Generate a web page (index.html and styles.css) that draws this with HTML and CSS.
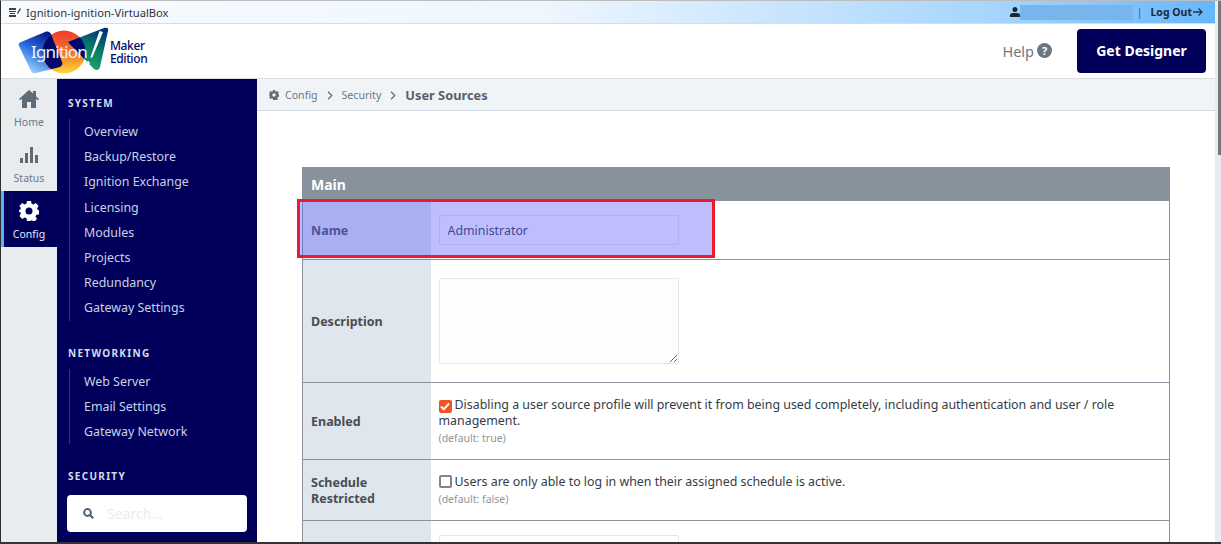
FILE: index.html
```html
<!DOCTYPE html>
<html>
<head>
    <title>User Sources</title>
    <link rel="stylesheet" href="styles.css">
</head>
<body>
<div class="window">
    <div class="page">
        <div class="topbar">
            <div class="host">
                <svg class="host-icon" width="12" height="11" viewBox="0 0 12 11"><path d="M0 1h7v2H0zM0 4h7v1H0zM1 6h5v1H1zM0 8h7v2H0z" fill="#444"/><path d="M8 6l3-5 1 1-3 5z" fill="#444"/></svg>
                <span>Ignition-ignition-VirtualBox</span>
            </div>
            <div class="session">
                <svg width="10" height="10" viewBox="0 0 10 10"><circle cx="5" cy="2.6" r="2.5" fill="#1c2530"/><path d="M0 10V8.4C0 6.8 1.4 6 3 6h4c1.600 0 3 .8 3 2.400V10z" fill="#1c2530"/></svg>
                <span class="blurred"></span>
                <span class="sep">|</span>
                <span class="logout">Log Out</span>
                <svg width="10" height="10" viewBox="0 0 10 10"><path d="M0 5h8.500M5.500 1.500L9 5l-3.500 3.500" fill="none" stroke="#2a3440" stroke-width="1.300"/></svg>
            </div>
        </div>

        <header class="header">
            <div class="logo">
                <svg width="135" height="50" viewBox="0 0 135 50">
                    <defs>
                        <linearGradient id="blue" x1="0.8" y1="0" x2="0.2" y2="1"><stop offset="0" stop-color="#000a78"/><stop offset="0.5" stop-color="#2468dc"/><stop offset="1" stop-color="#aee0ff"/></linearGradient>
                        <linearGradient id="sun" x1="0" y1="0" x2="0" y2="1"><stop offset="0" stop-color="#ee3c30"/><stop offset="0.55" stop-color="#f57a2a"/><stop offset="1" stop-color="#fdd835"/></linearGradient>
                        <linearGradient id="green" x1="0.8" y1="0" x2="0.4" y2="1"><stop offset="0" stop-color="#00307a"/><stop offset="0.5" stop-color="#0a7f6a"/><stop offset="1" stop-color="#1fa765"/></linearGradient>
                        <clipPath id="sun-clip"><circle cx="46" cy="26" r="21.500"/></clipPath>
                    </defs>
                    <path d="M3 16L27 6c3-1 5 0 6 2l11 28c1 2 0 4-2 5L18 47c-2 1-4 0-5-2L1 20c-1-2 0-3 2-4z" fill="url(#blue)"/>
                    <circle cx="46" cy="26" r="21.500" fill="url(#sun)"/>
                    <path d="M50 16L86 2c3-1 5 0 4 3l-8 36c-1 3-3 4-6 2z" fill="url(#green)"/>
                    <g clip-path="url(#sun-clip)">
                        <path d="M3 16L27 6c3-1 5 0 6 2l11 28c1 2 0 4-2 5L18 47c-2 1-4 0-5-2L1 20c-1-2 0-3 2-4z" fill="#00086a"/>
                        <path d="M50 16L86 2c3-1 5 0 4 3l-8 36c-1 3-3 4-6 2z" fill="#00086a"/>
                    </g>
                    <path d="M85 6l-11 26-1.500-.7L81.500 5z" fill="#fff"/>
                    <circle cx="70" cy="37" r="1.800" fill="#fff"/>
                    <text class="logo-word" x="13" y="32">Ignition</text>
                    <text class="logo-edition"><tspan x="92" y="24">Maker</tspan><tspan x="92" y="37">Edition</tspan></text>
                </svg>
            </div>
            <div class="header-actions">
                <span class="help">Help</span>
                <svg class="help-icon" width="15" height="15" viewBox="0 0 15 15"><circle cx="7.500" cy="7.500" r="7.500" fill="#6b7680"/><text class="help-mark" x="7.500" y="11.500">?</text></svg>
                <a class="get-designer">Get Designer</a>
            </div>
        </header>

        <div class="content">
            <div class="rail">
                <div class="rail-item">
                    <svg width="20" height="18" viewBox="0 0 20 18"><path d="M10 0L0 9l1.200 1.300L3 8.800V18h5v-6h4v6h5V8.800l1.800 1.500L20 9l-3-2.700V1h-3v2.600z" fill="#5f6b76"/></svg>
                    <span>Home</span>
                </div>
                <div class="rail-item status">
                    <svg width="18" height="16" viewBox="0 0 18 16"><path d="M0 11h3v5H0zM5 6h3v10H5zM10 0h3v16h-3zM15 8h3v8h-3z" fill="#5f6b76"/></svg>
                    <span>Status</span>
                </div>
                <div class="rail-item active">
                    <svg width="20" height="20" viewBox="0 0 20 20"><path fill-rule="evenodd" d="M8 0h4l.6 2.800 1.800.8L16.800 2l2.800 2.900-1.500 2.400.7 1.700 1.200.3v4l-2.800.6-.7 1.700 1.500 2.400-2.800 2.800-2.400-1.500-1.800.7L12 20H8l-.6-2.900-1.800-.7-2.400 1.500L.4 15.100l1.500-2.400-.7-1.700L0 10.700V9l1.200-.3.700-1.700L.4 4.900 3.200 2l2.400 1.600 1.800-.8zM10 6.500a3.500 3.500 0 1 0 0 7 3.500 3.500 0 0 0 0-7z" fill="#fff"/></svg>
                    <span>Config</span>
                </div>
            </div>

            <nav class="sidenav">
                <h4>SYSTEM</h4>
                <ul>
                    <li>Overview</li>
                    <li>Backup/Restore</li>
                    <li>Ignition Exchange</li>
                    <li>Licensing</li>
                    <li>Modules</li>
                    <li>Projects</li>
                    <li>Redundancy</li>
                    <li>Gateway Settings</li>
                </ul>
                <h4>NETWORKING</h4>
                <ul>
                    <li>Web Server</li>
                    <li>Email Settings</li>
                    <li>Gateway Network</li>
                </ul>
                <h4>SECURITY</h4>
                <div class="search">
                    <svg width="11" height="11" viewBox="0 0 11 11"><circle cx="4.500" cy="4.500" r="3.400" fill="none" stroke="#4e6378" stroke-width="2"/><path d="M7 7l3.200 3.200" stroke="#4e6378" stroke-width="2.200"/></svg>
                    <span>Search...</span>
                </div>
            </nav>

            <main class="main">
                <div class="crumbs">
                    <svg width="10" height="10" viewBox="0 0 20 20"><path fill-rule="evenodd" d="M8 0h4l.6 2.800 1.800.8L16.800 2l2.800 2.900-1.500 2.400.7 1.700 1.200.3v4l-2.800.6-.7 1.700 1.500 2.400-2.800 2.800-2.400-1.500-1.800.7L12 20H8l-.6-2.900-1.800-.7-2.400 1.500L.4 15.100l1.500-2.400-.7-1.700L0 10.700V9l1.200-.3.700-1.700L.4 4.900 3.200 2l2.400 1.600 1.800-.8zM10 6.500a3.500 3.500 0 1 0 0 7 3.500 3.500 0 0 0 0-7z" fill="#5f6b76"/></svg>
                    <span class="crumb">Config</span>
                    <svg class="chev" width="6" height="9" viewBox="0 0 6 9"><path d="M1 .8L4.800 4.500 1 8.200" fill="none" stroke="#5f6b76" stroke-width="1.200"/></svg>
                    <span class="crumb">Security</span>
                    <svg class="chev" width="6" height="9" viewBox="0 0 6 9"><path d="M1 .8L4.800 4.500 1 8.200" fill="none" stroke="#5f6b76" stroke-width="1.200"/></svg>
                    <span class="crumb current">User Sources</span>
                </div>

                <div class="form-wrap">
                    <table class="settings">
                        <tr><th colspan="2" class="section">Main</th></tr>
                        <tr class="row-name">
                            <td class="label">Name</td>
                            <td class="value"><input class="text-input" type="text" value="Administrator"></td>
                        </tr>
                        <tr class="row-desc">
                            <td class="label">Description</td>
                            <td class="value"><textarea class="text-area"></textarea></td>
                        </tr>
                        <tr class="row-enabled">
                            <td class="label">Enabled</td>
                            <td class="value">
                                <span class="check on"><svg width="10" height="9" viewBox="0 0 10 9"><path d="M1 4.500L3.800 7.300 9 1.500" fill="none" stroke="#fff" stroke-width="2"/></svg></span>Disabling a user source profile will prevent it from being used completely, including authentication and user / role management.
                                <div class="hint">(default: true)</div>
                            </td>
                        </tr>
                        <tr class="row-schedule">
                            <td class="label">Schedule Restricted</td>
                            <td class="value">
                                <span class="check"></span>Users are only able to log in when their assigned schedule is active.
                                <div class="hint">(default: false)</div>
                            </td>
                        </tr>
                        <tr class="row-next">
                            <td class="label"></td>
                            <td class="value"><div class="text-input next-input"></div></td>
                        </tr>
                    </table>
                    <div class="highlight"></div>
                </div>
            </main>
        </div>
    </div>
    <div class="scrollbar"><div class="thumb"></div></div>
</div>
</body>
</html>
```

FILE: styles.css
```css
* {
    box-sizing: border-box;
}

body {
    margin: 0;
    overflow: hidden;
    font-family: "Noto Sans", Arial, sans-serif;
    color: #343c46;
}

.window {
    display: flex;
    height: 544px;
    border-top: 1px solid #bdbdbd;
    border-left: 1px solid #2e2e2e;
    border-bottom: 2px solid #333;
    overflow: hidden;
}

.page {
    display: flex;
    flex-direction: column;
    flex: 1;
    min-width: 0;
}

/* top strip */
.topbar {
    display: flex;
    justify-content: space-between;
    align-items: center;
    height: 23px;
    flex-shrink: 0;
    padding: 0 12px 0 8px;
    background: linear-gradient(to right, #f8fbfe 0%, #eef6fe 45%, #a6d5fd 82%, #66b6fb 100%);
    border-bottom: 1px solid #d8dde2;
    font-size: 11.200px;
}

.host {
    display: flex;
    align-items: center;
    gap: 5px;
    color: #333;
}

.session {
    display: flex;
    align-items: center;
    font-size: 10.500px;
    font-weight: 700;
    color: #1f2a36;
}

.blurred {
    width: 113px;
    height: 15px;
    background: #78b5ec;
}

.sep {
    margin: 0 8px 0 4px;
    font-weight: 400;
    color: #4a5a6a;
}

.logout {
    margin-right: 1px;
}

/* header */
.header {
    display: flex;
    justify-content: space-between;
    align-items: center;
    height: 55px;
    flex-shrink: 0;
    padding: 0 9px 1px 17px;
    background: #fff;
    border-bottom: 1px solid #d8dde2;
}

.logo svg {
    display: block;
}

.logo-word {
    font-size: 17px;
    fill: #eef4ff;
    letter-spacing: -0.8px;
}

.logo-edition {
    font-size: 12px;
    font-weight: 500;
    fill: #000a6a;
    letter-spacing: -0.4px;
}

.header-actions {
    display: flex;
    align-items: center;
}

.help {
    font-size: 14.500px;
    color: #6d7883;
}

.help-icon {
    margin: 0 25px 0 3px;
}

.help-mark {
    font-size: 11px;
    font-weight: 700;
    fill: #fff;
    text-anchor: middle;
}

.get-designer {
    width: 129px;
    height: 44px;
    line-height: 44px;
    text-align: center;
    font-size: 14px;
    font-weight: 700;
    color: #fff;
    background: #00005a;
    border-radius: 4px;
}

/* left columns */
.content {
    display: flex;
    flex: 1;
    min-height: 0;
}

.rail {
    width: 56px;
    flex-shrink: 0;
    background: #e8ecef;
}

.rail-item {
    display: flex;
    flex-direction: column;
    align-items: center;
    height: 56px;
    padding-top: 11px;
    font-size: 10.500px;
    color: #6d7883;
}

.rail-item span {
    margin-top: 7px;
}

.rail-item.status {
    padding-top: 12px;
}

.rail-item.status span {
    margin-top: 8px;
}

.rail-item.active {
    padding-top: 10px;
    color: #e6ecf5;
    background: #00005a;
    box-shadow: inset 3px 0 0 #5aaefc;
}

.rail-item.active span {
    margin-top: 6px;
}

.sidenav {
    position: relative;
    width: 200px;
    flex-shrink: 0;
    padding: 17px 11px 0;
    background: #00005a;
    color: #c9d2e3;
    overflow: hidden;
}

.sidenav h4 {
    margin: 0;
    font-size: 10px;
    line-height: 14px;
    letter-spacing: 1.3px;
    color: #d4dcea;
}

.sidenav ul {
    margin: 9px 0 25px 1px;
    padding: 0 0 0 14px;
    list-style: none;
    border-left: 1px solid #33367f;
}

.sidenav li {
    height: 25.200px;
    line-height: 25px;
    font-size: 12.400px;
}

.search {
    position: absolute;
    left: 10px;
    top: 416px;
    display: flex;
    align-items: center;
    gap: 13px;
    width: 180px;
    height: 37px;
    padding-left: 16px;
    background: #fff;
    border-radius: 4px;
    font-size: 14px;
    color: #ececec;
}

/* breadcrumb and form */
.main {
    flex: 1;
    min-width: 0;
    background: #fff;
}

.crumbs {
    display: flex;
    align-items: center;
    height: 32px;
    padding: 1px 0 0 12px;
    background: #f1f4f7;
    border-bottom: 1px solid #d3dae2;
    font-size: 10.600px;
    color: #6d7883;
}

.crumb {
    margin-left: 6px;
}

.chev {
    margin-left: 9px;
    margin-right: 3px;
}

.crumb.current {
    font-size: 12.800px;
    font-weight: 700;
    color: #56616c;
}

.form-wrap {
    position: relative;
    padding: 56px 0 0 45px;
}

.settings {
    width: 868px;
    border-collapse: collapse;
    font-size: 12.400px;
    line-height: 16px;
    border-left: 1px solid #87929c;
    border-right: 1px solid #87929c;
}

.settings tr + tr {
    border-bottom: 1px solid #87929c;
}

.section {
    height: 34px;
    padding: 1px 8px 0;
    text-align: left;
    font-size: 14px;
    font-weight: 700;
    color: #fff;
    background: #87929c;
}

.label {
    width: 128px;
    padding: 3px 8px 0;
    font-size: 12.500px;
    font-weight: 700;
    color: #4a4d52;
    background: #dfe6ed;
}

.value {
    padding: 8px;
    vertical-align: middle;
}

.row-name {
    height: 58px;
}

.row-desc {
    height: 123px;
}

.row-enabled {
    height: 77px;
}

.row-schedule {
    height: 61px;
}

.row-next {
    height: 60px;
}

.row-next .value {
    vertical-align: top;
    padding-top: 14px;
}

.text-input {
    display: block;
    width: 240px;
    height: 30px;
    padding: 1px 8.500px 0 8px;
    font: inherit;
    color: #343c46;
    border: 1px solid #e4e8ec;
    border-radius: 2px;
    background: #fff;
}

.text-area {
    display: block;
    width: 240px;
    height: 86px;
    border: 1px solid #e4e8ec;
    border-radius: 2px;
    background: #fdfdfd;
}

.check {
    display: inline-flex;
    align-items: center;
    justify-content: center;
    width: 13px;
    height: 13px;
    margin-right: 3px;
    vertical-align: -2px;
    border: 2px solid #87828c;
    border-radius: 2px;
}

.check.on {
    background: #ef5423;
    border: none;
}

.hint {
    margin-top: 2px;
    font-size: 10.500px;
    line-height: 14px;
    color: #8f969d;
}

.highlight {
    position: absolute;
    left: 40px;
    top: 88px;
    width: 418px;
    height: 59px;
    background: rgba(88, 88, 255, 0.39);
    border: 3px solid #e81c2c;
}

.scrollbar {
    width: 6px;
    flex-shrink: 0;
    display: flex;
    justify-content: flex-end;
    background: #e8ebf2;
}

.thumb {
    width: 3px;
    height: 154px;
    background: #777;
}
```
